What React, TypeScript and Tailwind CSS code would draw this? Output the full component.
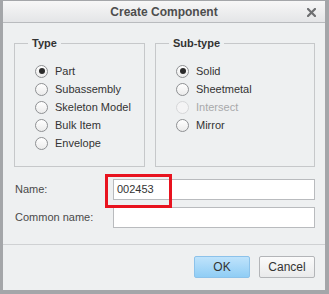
import React from "react";

function Radio({ checked = false, disabled = false, label }: { checked?: boolean; disabled?: boolean; label: string }) {
  return (
    <div className="flex h-[18px] items-center">
      <div
        className={
          disabled
            ? "flex h-[13px] w-[13px] items-center justify-center rounded-full border border-[#d6d7d9] bg-[#f4f4f5]"
            : "flex h-[13px] w-[13px] items-center justify-center rounded-full border border-[#8e9093] bg-gradient-to-b from-[#ffffff] to-[#ebebeb]"
        }
      >
        {checked && <div className="h-[6px] w-[6px] rounded-full bg-[#2a2a2a]" />}
      </div>
      <span className={disabled ? "ml-[7px] text-[11px] text-[#a8a9ab]" : "ml-[7px] text-[11px] text-[#333333]"}>
        {label}
      </span>
    </div>
  );
}

export default function App() {
  return (
    <div
      className="relative flex h-[294px] w-[329px] flex-col border-b-[4px] border-l-[3px] border-r-[4px] border-t border-[#a4a6a9] bg-[#eef0f1]"
      style={{ fontFamily: '"Liberation Sans", Arial, sans-serif' }}
    >
      {/* Title bar */}
      <div className="relative flex h-[22px] items-center justify-center border-b border-[#b9bbbe] bg-gradient-to-b from-[#f7f7f7] to-[#e4e5e7]">
        <span className="text-[12px] font-bold text-[#4d4d4d]">Create Component</span>
        <svg className="absolute right-[9px] top-[7px]" width="9" height="9" viewBox="0 0 9 9">
          <path d="M1 1 L8 8 M8 1 L1 8" stroke="#6e6f71" strokeWidth="2.2" strokeLinecap="square" />
        </svg>
      </div>

      {/* Content */}
      <div className="flex flex-1 flex-col">
        <div className="flex gap-[10px] pl-[11px] pr-[10px] pt-[13px]">
          <fieldset className="w-[131px] border border-[#c6c8ca] pb-[14px] pt-[12px]">
            <legend className="ml-[13px] px-[4px] text-[11px] font-bold leading-[14px] text-[#333333]">Type</legend>
            <div className="pl-[20px]">
              <Radio checked label="Part" />
              <Radio label="Subassembly" />
              <Radio label="Skeleton Model" />
              <Radio label="Bulk Item" />
              <Radio label="Envelope" />
            </div>
          </fieldset>
          <fieldset className="flex-1 border border-[#c6c8ca] pb-[14px] pt-[12px]">
            <legend className="ml-[13px] px-[4px] text-[11px] font-bold leading-[14px] text-[#333333]">Sub-type</legend>
            <div className="pl-[20px]">
              <Radio checked label="Solid" />
              <Radio label="Sheetmetal" />
              <Radio disabled label="Intersect" />
              <Radio label="Mirror" />
            </div>
          </fieldset>
        </div>

        <div className="mt-[12px] flex flex-col gap-[7px] pl-[11px] pr-[10px]">
          <div className="flex items-center">
            <span className="w-[99px] pl-[1px] text-[11px] text-[#4a4a4a]">Name:</span>
            <div className="flex h-[21px] flex-1 items-center border border-[#b9bbbe] bg-white pl-[3px] text-[11px] text-[#333333]">
              002453
            </div>
          </div>
          <div className="flex items-center">
            <span className="w-[99px] pl-[1px] text-[11px] text-[#4a4a4a]">Common name:</span>
            <div className="h-[21px] flex-1 border border-[#b9bbbe] bg-white" />
          </div>
        </div>

        <div className="mt-[16px] h-px bg-[#cfd1d3]" />

        <div className="mt-[11px] flex justify-end gap-[9px] pr-[10px]">
          <button className="h-[22px] w-[56px] rounded-[2px] border border-[#8cc2ea] bg-gradient-to-b from-[#bfe3fb] to-[#8fcdf5] text-[12px] text-[#333333]">
            OK
          </button>
          <button className="h-[22px] w-[56px] rounded-[2px] border border-[#b3b5b8] bg-gradient-to-b from-[#fbfbfb] to-[#e9eaeb] text-[12px] text-[#333333]">
            Cancel
          </button>
        </div>
      </div>

      {/* Red annotation rectangle */}
      <div className="pointer-events-none absolute left-[102px] top-[173px] h-[34px] w-[67px] border-[3px] border-[#e8131f]" />
    </div>
  );
}
